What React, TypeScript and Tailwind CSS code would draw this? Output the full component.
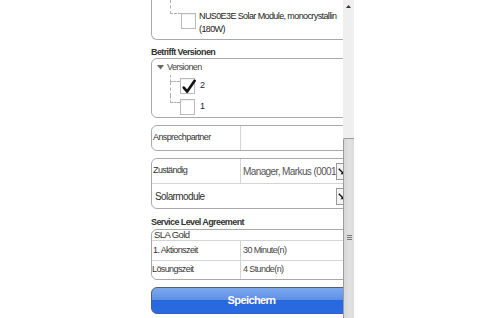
import type React from 'react'

const Checkbox: React.FC<{checked?: boolean}> = ({checked}) => (
  <div className="relative w-[15px] h-[16px] shrink-0 border border-[#b9b9b9] bg-white shadow-[inset_0_1px_1px_rgba(0,0,0,0.06)]">
    {checked && (
      <svg className="absolute left-[1px] top-[0px]" width="14" height="15" viewBox="0 0 14 15">
        <path
          d="M1.8 8.6 L5.2 12.6 L12.6 1.8"
          fill="none"
          stroke="#151515"
          strokeWidth="2.7"
          strokeLinecap="round"
          strokeLinejoin="round"
        />
      </svg>
    )}
  </div>
)

const SelectButton: React.FC = () => (
  <div className="w-[15px] h-[17px] shrink-0 border border-[#9a9a9a] bg-[#f3f3f3] relative">
    <svg className="absolute left-[1px] top-[4px]" width="7" height="7" viewBox="0 0 7 7">
      <path d="M0.8 0.8 L5.6 5.6" stroke="#111" strokeWidth="1.4" />
      <path d="M6.3 2.4 L6.3 6.3 L2.4 6.3 Z" fill="#111" />
    </svg>
  </div>
)

const TreeRow: React.FC<{label: string; checked?: boolean; last?: boolean}> = ({label, checked, last}) => (
  <div className="flex items-start h-[21px]">
    <div className="w-[10px] self-stretch flex flex-col">
      <div className="h-[7px] border-l border-b border-dashed border-[#b0b0b0]" />
      <div className={last ? 'flex-1' : 'flex-1 border-l border-dashed border-[#b0b0b0]'} />
    </div>
    <div className="mt-[3px]">
      <Checkbox checked={checked} />
    </div>
    <span className="ml-[5px] mt-[4px] text-[9px] leading-[12px] text-[#1c2040]">{label}</span>
  </div>
)

export default function App() {
  return (
    <div className="w-[502px] h-[318px] bg-white flex overflow-hidden font-['Liberation_Sans',Arial,sans-serif] tracking-[-0.6px] text-[#333]">
      <div className="w-[151px] shrink-0" />

      {/* Formularbereich */}
      <div className="w-[192px] shrink-0 overflow-hidden">
        <div className="w-[201px] flex flex-col">
          {/* Produktbaum (oben abgeschnitten) */}
          <div className="h-[40px] border-x border-b border-[#a9a9a9] rounded-b-[6px] flex items-start pl-[18px]">
            <div className="w-[11px] h-[14px] border-l border-b border-dashed border-[#b0b0b0]" />
            <div className="mt-[13px]">
              <Checkbox />
            </div>
            <div className="ml-[3px] mt-[10px] text-[9px] leading-[13px] text-[#222] whitespace-nowrap">
              <div>NUS0E3E Solar Module, monocrystallin</div>
              <div>(180W)</div>
            </div>
          </div>

          <div className="mt-[6px] h-[12px] leading-[12px] text-[9px] font-bold text-[#333]">Betrifft Versionen</div>

          {/* Versionen */}
          <div className="h-[60px] border border-[#a9a9a9] rounded-[6px] overflow-hidden">
            <div className="h-[16px] flex items-center pl-[5px]">
              <svg width="7" height="5" viewBox="0 0 7 5">
                <path d="M0 0 L7 0 L3.5 4.5 Z" fill="#666" />
              </svg>
              <span className="ml-[3px] text-[9px] leading-[12px] text-[#444]">Versionen</span>
            </div>
            <div className="ml-[18px]">
              <TreeRow label="2" checked />
              <TreeRow label="1" last />
            </div>
          </div>

          {/* Ansprechpartner */}
          <div className="mt-[7px] h-[26px] border border-[#a9a9a9] rounded-[6px] flex">
            <div className="w-[89px] border-r border-[#d4d4d4] flex items-center pl-[1px] text-[9px] text-[#333]">
              Ansprechpartner
            </div>
            <div className="flex-1" />
          </div>

          {/* Zuständig */}
          <div className="mt-[7px] h-[51px] border border-[#a9a9a9] rounded-[6px] flex flex-col">
            <div className="h-[25px] border-b border-[#d4d4d4] flex">
              <div className="w-[89px] border-r border-[#d4d4d4] flex items-center pl-[1px] text-[9px] text-[#333]">
                Zuständig
              </div>
              <div className="flex-1 flex items-center min-w-0">
                <div className="flex-1 min-w-0 overflow-hidden whitespace-nowrap pl-[2px] text-[10px] text-[#555]">
                  Manager, Markus (0001)
                </div>
                <SelectButton />
              </div>
            </div>
            <div className="h-[24px] flex items-center">
              <div className="flex-1 pl-[3px] text-[10px] text-[#333]">Solarmodule</div>
              <SelectButton />
            </div>
          </div>

          <div className="mt-[7px] h-[13px] leading-[13px] text-[9px] font-bold text-[#333]">Service Level Agreement</div>

          {/* SLA */}
          <div className="h-[51px] border border-[#a9a9a9] rounded-[6px] flex flex-col text-[9px]">
            <div className="h-[11px] border-b border-[#d4d4d4] flex items-center pl-[2px] text-[9.5px] text-[#333]">
              SLA Gold
            </div>
            <div className="h-[20px] border-b border-[#d4d4d4] flex">
              <div className="w-[89px] border-r border-[#d4d4d4] flex items-center pl-[1px] text-[#333]">1. Aktionszeit</div>
              <div className="flex-1 flex items-center pl-[2px] text-[#444]">30 Minute(n)</div>
            </div>
            <div className="h-[18px] flex">
              <div className="w-[89px] border-r border-[#d4d4d4] flex items-center text-[#333]">Lösungszeit</div>
              <div className="flex-1 flex items-center pl-[2px] text-[#444]">4 Stunde(n)</div>
            </div>
          </div>

          {/* Speichern */}
          <button className="mt-[7px] h-[27px] w-full rounded-[6px] border border-[#4a5f86] bg-[linear-gradient(to_bottom,#7da8ee_0%,#5b8fe7_50%,#2668df_50%,#2a6be1_100%)] text-white text-[11px] font-bold flex items-center justify-center">
            Speichern
          </button>
        </div>
      </div>

      {/* Scrollbar */}
      <div className="w-[11px] shrink-0 bg-[#efefef] flex flex-col">
        <div className="h-[12px] flex items-center justify-center">
          <svg width="5" height="3" viewBox="0 0 5 3">
            <path d="M0 3 L2.5 0 L5 3 Z" fill="#333" />
          </svg>
        </div>
        <div className="flex-1" />
        <div className="h-[180px] border-l border-t border-[#9c9c9c] rounded-tl-[2px] bg-[linear-gradient(to_right,#d6d6d6,#e2e2e2_60%,#d9d9d9)] flex flex-col items-center pt-[96px]">
          <div className="w-[5px] h-[1px] bg-[#777]" />
          <div className="w-[5px] h-[1px] bg-[#777] mt-[1px]" />
          <div className="w-[5px] h-[1px] bg-[#777] mt-[1px]" />
        </div>
      </div>

      <div className="flex-1" />
    </div>
  )
}
